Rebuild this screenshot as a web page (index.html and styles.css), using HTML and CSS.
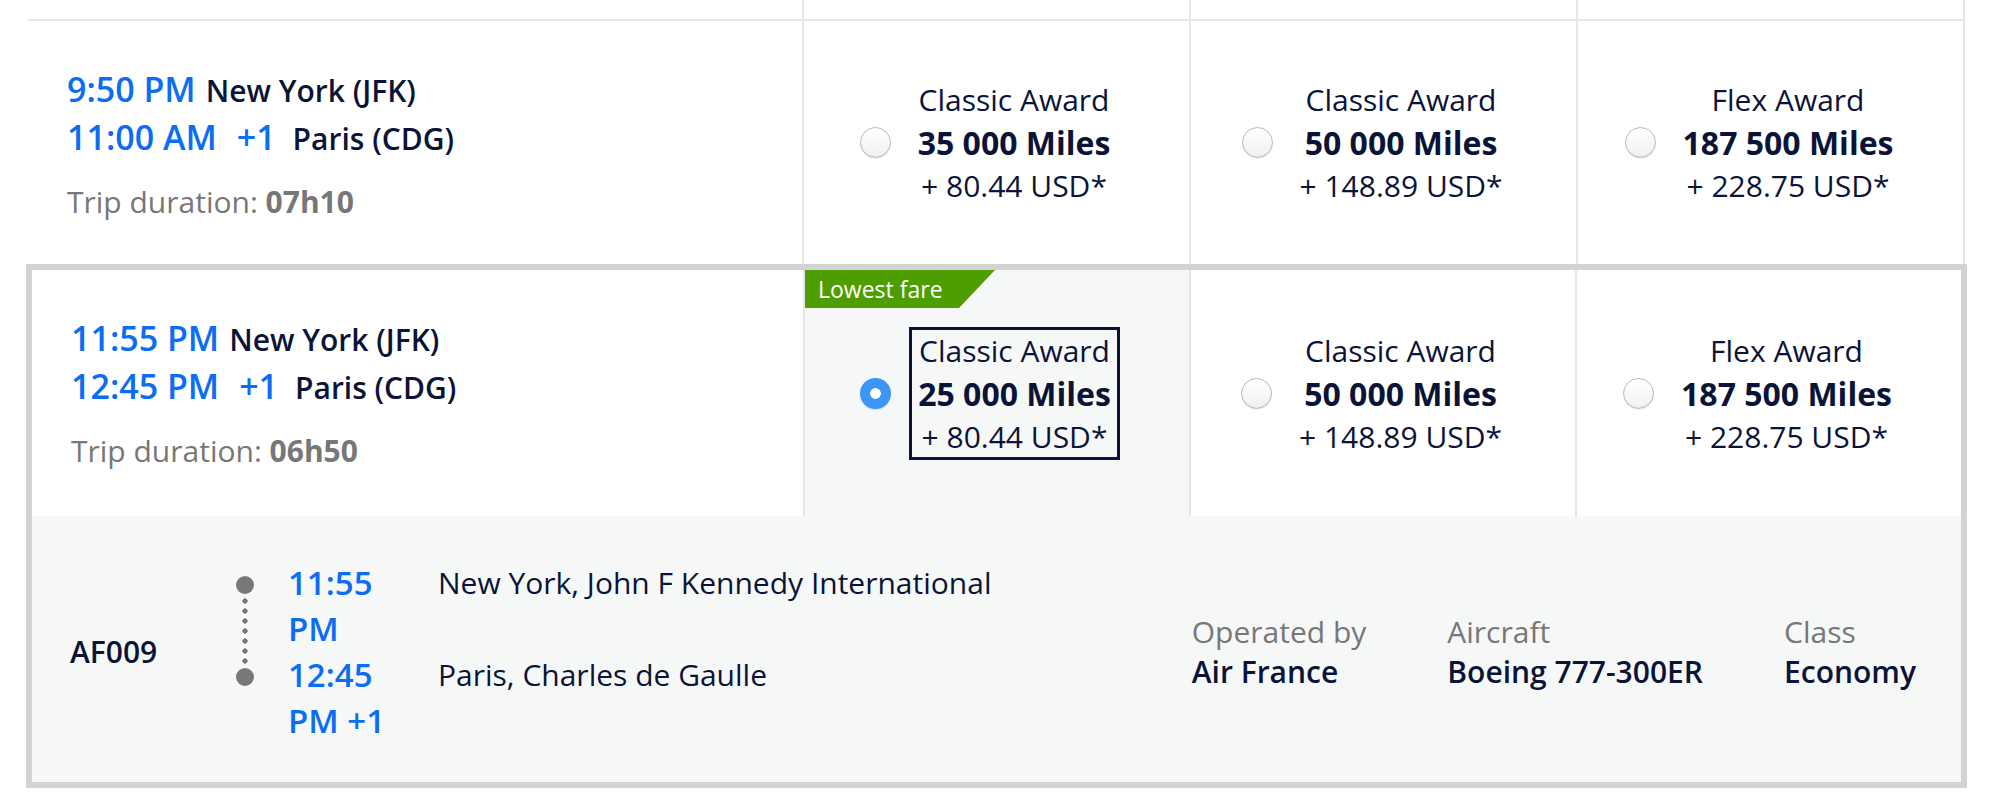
FILE: index.html
```html
<!DOCTYPE html>
<html lang="en">
<head>
<meta charset="utf-8">
<title>Flight results</title>
<link rel="stylesheet" href="styles.css">
</head>
<body>
<div class="results">
  <div class="row row-stub">
    <div class="cell cell-flight"></div>
    <div class="cell cell-fare"></div>
    <div class="cell cell-fare"></div>
    <div class="cell cell-fare"></div>
  </div>

  <div class="row row-plain">
    <div class="cell cell-flight">
      <div class="leg"><span class="time">9:50 PM</span><span class="city">New York (JFK)</span></div>
      <div class="leg"><span class="time">11:00 AM</span><span class="plus">+1</span><span class="city">Paris (CDG)</span></div>
      <div class="duration">Trip duration: <b>07h10</b></div>
    </div>
    <div class="cell cell-fare">
      <div class="fare">
        <span class="radio"></span>
        <span class="fare-box"><span class="fare-name">Classic Award</span><span class="fare-miles">35 000 Miles</span><span class="fare-tax">+ 80.44 USD*</span></span>
      </div>
    </div>
    <div class="cell cell-fare">
      <div class="fare">
        <span class="radio"></span>
        <span class="fare-box"><span class="fare-name">Classic Award</span><span class="fare-miles">50 000 Miles</span><span class="fare-tax">+ 148.89 USD*</span></span>
      </div>
    </div>
    <div class="cell cell-fare">
      <div class="fare">
        <span class="radio"></span>
        <span class="fare-box"><span class="fare-name">Flex Award</span><span class="fare-miles">187 500 Miles</span><span class="fare-tax">+ 228.75 USD*</span></span>
      </div>
    </div>
  </div>

  <div class="card">
    <div class="row row-card">
      <div class="cell cell-flight">
        <div class="leg"><span class="time">11:55 PM</span><span class="city">New York (JFK)</span></div>
        <div class="leg"><span class="time">12:45 PM</span><span class="plus">+1</span><span class="city">Paris (CDG)</span></div>
        <div class="duration">Trip duration: <b>06h50</b></div>
      </div>
      <div class="cell cell-fare is-selected">
        <span class="badge">Lowest fare</span>
        <div class="fare">
          <span class="radio radio-on"></span>
          <span class="fare-box"><span class="fare-name">Classic Award</span><span class="fare-miles">25 000 Miles</span><span class="fare-tax">+ 80.44 USD*</span></span>
        </div>
      </div>
      <div class="cell cell-fare">
        <div class="fare">
          <span class="radio"></span>
          <span class="fare-box"><span class="fare-name">Classic Award</span><span class="fare-miles">50 000 Miles</span><span class="fare-tax">+ 148.89 USD*</span></span>
        </div>
      </div>
      <div class="cell cell-fare">
        <div class="fare">
          <span class="radio"></span>
          <span class="fare-box"><span class="fare-name">Flex Award</span><span class="fare-miles">187 500 Miles</span><span class="fare-tax">+ 228.75 USD*</span></span>
        </div>
      </div>
    </div>

    <div class="details">
      <div class="flight-no">AF009</div>
      <div class="segment">
        <div class="timeline">
          <span class="tl-dot"></span>
          <span class="tl-line"></span>
          <span class="tl-dot"></span>
        </div>
        <div class="stops">
          <div class="stop">
            <div class="stop-time">11:55 PM</div>
            <div class="stop-name">New York, John F Kennedy International</div>
          </div>
          <div class="stop">
            <div class="stop-time">12:45 PM +1</div>
            <div class="stop-name">Paris, Charles de Gaulle</div>
          </div>
        </div>
      </div>
      <div class="info">
        <div class="info-item"><div class="info-label">Operated by</div><div class="info-value">Air France</div></div>
        <div class="info-item"><div class="info-label">Aircraft</div><div class="info-value">Boeing 777-300ER</div></div>
        <div class="info-item"><div class="info-label">Class</div><div class="info-value">Economy</div></div>
      </div>
    </div>
  </div>
</div>
</body>
</html>
```

FILE: styles.css
```css
* { box-sizing: border-box; }

html, body {
  margin: 0;
  padding: 0;
  background: #ffffff;
}

body {
  font-family: "Open Sans", "Noto Sans", sans-serif;
  color: #0b1437;
}

.results {
  width: 1941px;
  margin-left: 26px;
}

.row {
  display: grid;
  grid-template-columns: 1fr repeat(3, 387px);
}

.row-stub,
.row-plain {
  margin: 0 2px;
  border-right: 2px solid #e6e6e6;
}

.row-stub { height: 19px; }

.row-plain {
  height: 245px;
  border-top: 2px solid #e6e6e6;
}

.card {
  border: 6px solid #d3d3d3;
}

.row-card {
  grid-template-columns: 1fr repeat(3, 386px);
  height: 246px;
}

.cell-flight {
  padding: 45px 0 0 39px;
}

.cell-fare {
  position: relative;
  border-left: 2px solid #e6e6e6;
  display: flex;
  align-items: center;
  justify-content: center;
  padding-right: 14px;
}

.is-selected { background: #f6f8f8; }

/* flight summary */
.leg {
  font-size: 34px;
  line-height: 46px;
  white-space: nowrap;
}

.time,
.plus {
  color: #0b6cf4;
  font-weight: 600;
}

.plus { margin-left: 20px; }

.city {
  font-size: 30px;
  font-weight: 600;
  margin-left: 10px;
}

.plus + .city { margin-left: 17px; }

.duration {
  margin-top: 20px;
  font-size: 30px;
  line-height: 40px;
  color: #777777;
}

.duration b { font-weight: 700; }

/* fares */
.fare {
  display: flex;
  align-items: center;
}

.radio {
  width: 31px;
  height: 31px;
  border-radius: 50%;
  margin-right: 18px;
  border: 1px solid #b9b9b9;
  background: linear-gradient(#ffffff, #f1f1f1);
  box-shadow: inset 0 -1px 1px rgba(0, 0, 0, 0.06), 0 1px 1px rgba(0, 0, 0, 0.06);
  flex: none;
}

.radio-on {
  border: none;
  background: radial-gradient(circle, #ffffff 0 5px, #3d95f7 5.6px);
  box-shadow: 0 1px 1px rgba(0, 0, 0, 0.12);
}

.fare-box {
  display: flex;
  flex-direction: column;
  align-items: center;
  border: 3px solid transparent;
  padding: 0 6px;
  white-space: nowrap;
}

.is-selected .fare-box { border-color: #0b1437; }

.fare-name {
  font-size: 30px;
  line-height: 42px;
}

.fare-miles {
  font-size: 32px;
  font-weight: 700;
  line-height: 44px;
}

.fare-tax {
  font-size: 30px;
  line-height: 41px;
}

.badge {
  position: absolute;
  top: 0;
  left: 0;
  width: 190px;
  height: 38px;
  padding-left: 13px;
  background: #4f9e00;
  color: #ffffff;
  font-size: 23px;
  line-height: 38px;
  clip-path: polygon(0 0, 100% 0, calc(100% - 36px) 100%, 0 100%);
}

/* details */
.details {
  height: 266px;
  background: #f6f8f8;
  display: flex;
  align-items: center;
  padding: 6px 45px 0 38px;
}

.flight-no {
  width: 166px;
  font-size: 30px;
  font-weight: 600;
  line-height: 40px;
}

.segment { display: flex; }

.timeline {
  width: 18px;
  margin-right: 34px;
  padding-top: 16px;
  display: flex;
  flex-direction: column;
  align-items: center;
}

.tl-dot {
  width: 18px;
  height: 18px;
  border-radius: 50%;
  background: #787878;
}

.tl-line {
  width: 6px;
  height: 70px;
  margin: 2px 0;
  background: radial-gradient(circle, #787878 0 2.4px, transparent 2.9px) center top / 6px 10px repeat-y;
}

.stop { display: flex; }

.stop-time {
  width: 150px;
  padding-right: 30px;
  font-size: 33px;
  font-weight: 600;
  line-height: 46px;
  color: #0b6cf4;
}

.stop-name {
  font-size: 30px;
  line-height: 46px;
  white-space: nowrap;
}

.info {
  margin-left: auto;
  display: flex;
  gap: 81px;
}

.info-label {
  font-size: 30px;
  line-height: 40px;
  color: #777777;
}

.info-value {
  font-size: 30px;
  line-height: 40px;
  font-weight: 600;
}
```
